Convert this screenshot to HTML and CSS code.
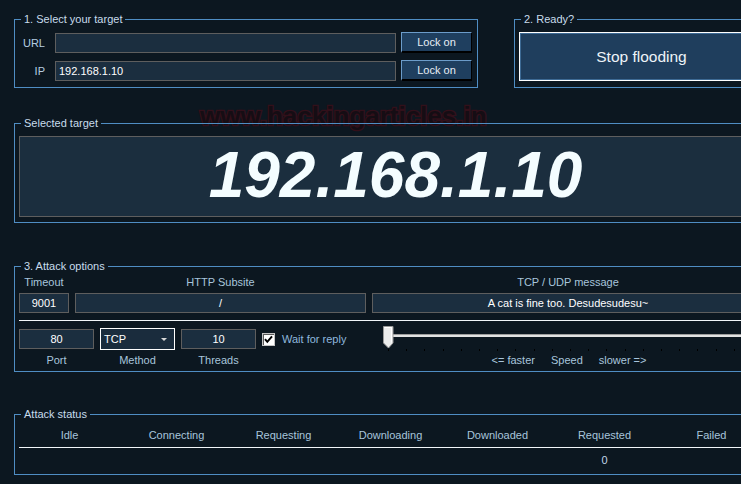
FILE: index.html
```html
<!DOCTYPE html>
<html>
<head>
<meta charset="utf-8">
<title>LOIC</title>
<link rel="stylesheet" href="styles.css">
</head>
<body>
<div class="app">
  <div class="watermark">www.hackingarticles.in</div>

  <div class="top">
    <fieldset class="grp grp-target">
      <legend>1. Select your target</legend>
      <div class="target-rows">
        <div class="trow">
          <span class="tlabel">URL</span>
          <div class="box url"></div>
          <div class="lock">Lock on</div>
        </div>
        <div class="trow">
          <span class="tlabel">IP</span>
          <div class="box url">192.168.1.10</div>
          <div class="lock">Lock on</div>
        </div>
      </div>
    </fieldset>

    <fieldset class="grp grp-ready">
      <legend>2. Ready?</legend>
      <div class="ready-inner">
        <div class="stop">Stop flooding</div>
      </div>
    </fieldset>
  </div>

  <fieldset class="grp grp-wide grp-selected">
    <legend>Selected target</legend>
    <div class="selected-inner">
      <div class="bigip">192.168.1.10</div>
    </div>
  </fieldset>

  <fieldset class="grp grp-wide grp-options">
    <legend>3. Attack options</legend>
    <div class="options-inner">
      <div class="opt-row1">
        <div class="olabel">Timeout</div>
        <div class="olabel">HTTP Subsite</div>
        <div class="olabel">TCP / UDP message</div>
        <div class="box center">9001</div>
        <div class="box center">/</div>
        <div class="box center">A cat is fine too. Desudesudesu~</div>
      </div>
      <div class="hline"></div>
      <div class="opt-row2">
        <div class="box center small">80</div>
        <div class="select">
          <span>TCP</span>
          <span class="arrow"></span>
        </div>
        <div class="box center small">10</div>
        <div class="check-cell">
          <span class="checkbox">
            <svg width="11" height="11" viewBox="0 0 11 11"><path d="M2 5.2 L4.3 7.8 L9 2.4" fill="none" stroke="#000" stroke-width="2"/></svg>
          </span>
          <span class="wait">Wait for reply</span>
        </div>
        <div class="slider">
          <div class="track"></div>
          <div class="ticks"></div>
          <svg class="thumb" width="11" height="23" viewBox="0 0 11 23">
            <path d="M0.5 0.5 H10 V17 L5.5 22 L0.5 17 Z" fill="#ececec" stroke="#9a9a9a" stroke-width="1"/>
            <path d="M1.5 1.5 H8.5 V16.5" fill="none" stroke="#ffffff" stroke-width="1"/>
          </svg>
        </div>
        <div class="olabel">Port</div>
        <div class="olabel">Method</div>
        <div class="olabel">Threads</div>
        <div></div>
        <div class="speed"><span>&lt;= faster</span><span>Speed</span><span>slower =&gt;</span></div>
      </div>
    </div>
  </fieldset>

  <fieldset class="grp grp-wide grp-status">
    <legend>Attack status</legend>
    <div class="status-inner">
      <div class="status-grid">
        <div>Idle</div>
        <div>Connecting</div>
        <div>Requesting</div>
        <div>Downloading</div>
        <div>Downloaded</div>
        <div>Requested</div>
        <div>Failed</div>
      </div>
      <div class="hline"></div>
      <div class="status-grid values">
        <div></div>
        <div></div>
        <div></div>
        <div></div>
        <div></div>
        <div>0</div>
        <div></div>
      </div>
    </div>
  </fieldset>
</div>
</body>
</html>
```

FILE: styles.css
```css
html, body {
  margin: 0;
  padding: 0;
}

body {
  background: #0c1720;
  width: 741px;
  height: 484px;
  overflow: hidden;
  font-family: "Liberation Sans", Arial, sans-serif;
  font-size: 11px;
  color: #a8c5dc;
}

.app {
  position: relative;
  padding: 13px 0 0 14px;
  width: 800px;
}

.watermark {
  position: absolute;
  left: 200px;
  top: 103px;
  z-index: -1;
  font-family: "Liberation Sans", Arial, sans-serif;
  font-weight: bold;
  font-size: 26px;
  line-height: 26px;
  color: #150d14;
  -webkit-text-stroke: 2.6px #32101a;
  paint-order: stroke fill;
  white-space: nowrap;
}

fieldset.grp {
  margin: 0;
  padding: 0;
  border: 1px solid #4f8dc3;
  box-sizing: border-box;
  min-width: 0;
}

legend {
  padding: 0 3px;
  margin-left: 6px;
  line-height: 13px;
  font-size: 11px;
  color: #c8dcec;
}

.top {
  display: flex;
}

.grp-target {
  width: 464px;
}

.grp-ready {
  width: 280px;
  margin-left: 36px !important;
}

.target-rows {
  display: flex;
  flex-direction: column;
  gap: 7px;
  padding: 6px 5px 6px 0;
}

.trow {
  display: flex;
  align-items: center;
  height: 21px;
}

.tlabel {
  width: 30px;
  text-align: right;
  margin-right: 10px;
  color: #b4cde0;
}

.box {
  box-sizing: border-box;
  height: 20px;
  background: #1b2e3f;
  border: 1px solid #5e5e5e;
  color: #ffffff;
  line-height: 18px;
  padding: 0 3px;
  white-space: nowrap;
  overflow: hidden;
}

.box.url {
  width: 341px;
}

.box.center {
  text-align: center;
}

.lock {
  box-sizing: border-box;
  width: 71px;
  height: 21px;
  margin-left: 5px;
  background: #1f3f5f;
  border-top: 1px solid #6c9cca;
  border-left: 1px solid #6c9cca;
  border-right: 1px solid #000;
  border-bottom: 2px solid #000;
  color: #e6eef5;
  font-size: 11px;
  line-height: 18px;
  text-align: center;
}

.ready-inner {
  padding: 6px 0 6px 4px;
}

.stop {
  box-sizing: border-box;
  width: 245px;
  height: 49px;
  background: #1f3e5d;
  border: 1px solid #ffffff;
  box-shadow: inset 0 0 0 1px #3d6a94;
  color: #eef4f8;
  font-size: 15.5px;
  line-height: 47px;
  text-align: center;
}

.grp-wide {
  width: 763px;
}

.grp-selected {
  margin-top: 29px !important;
}

.selected-inner {
  padding: 6px 4px 5px 4px;
}

.bigip {
  box-sizing: border-box;
  height: 81px;
  background: #1b2e3e;
  border: 1px solid #5e5e5e;
  color: #f4fdff;
  font-weight: bold;
  font-style: italic;
  font-size: 64px;
  line-height: 77px;
  text-align: center;
  white-space: nowrap;
}

.grp-options {
  margin-top: 37px !important;
}

.options-inner {
  padding: 3px 0 4px 4px;
}

.opt-row1 {
  display: grid;
  grid-template-columns: 50px 291px 392px;
  column-gap: 6px;
  row-gap: 4px;
}

.olabel {
  line-height: 13px;
  text-align: center;
  color: #a8c5dc;
  white-space: nowrap;
}

.hline {
  height: 1px;
  background: #f2f6f9;
  margin-top: 7px;
}

.opt-row2 {
  margin-top: 7px;
  display: grid;
  grid-template-columns: 75px 75px 75px 115px 380px;
  grid-template-rows: 22px 13px;
  column-gap: 6px;
  row-gap: 4px;
  align-items: center;
}

.select {
  box-sizing: border-box;
  height: 22px;
  border: 1px solid #ffffff;
  background: #1a2c3d;
  color: #ffffff;
  display: flex;
  align-items: center;
  justify-content: space-between;
  padding: 0 7px 0 3px;
}

.arrow {
  width: 0;
  height: 0;
  border-left: 3px solid transparent;
  border-right: 3px solid transparent;
  border-top: 3px solid #d8d8d8;
}

.check-cell {
  display: flex;
  align-items: center;
  height: 22px;
}

.checkbox {
  box-sizing: border-box;
  width: 13px;
  height: 13px;
  background: #ffffff;
  border: 1px solid #c4c4c4;
  box-shadow: inset 1px 1px 0 #5a5a5a;
  display: flex;
  align-items: center;
  justify-content: center;
  margin-right: 7px;
}

.checkbox svg {
  display: block;
}

.wait {
  color: #8fb7de;
  white-space: nowrap;
}

.slider {
  position: relative;
  height: 22px;
}

.track {
  margin: 6px 0 0 10px;
  height: 2px;
  border-top: 1px solid #9c9c9c;
  background: #e2e2e2;
}

.ticks {
  position: absolute;
  left: 5px;
  right: 0;
  top: 21px;
  height: 2px;
  background: repeating-linear-gradient(to right, #000 0, #000 1px, transparent 1px, transparent 18.2px);
}

.thumb {
  position: absolute;
  left: 0;
  top: -2px;
  display: block;
}

.speed {
  display: flex;
  justify-content: center;
  gap: 16px;
  line-height: 13px;
  color: #a8c5dc;
  width: 372px;
  white-space: nowrap;
}

.grp-status {
  margin-top: 36px !important;
}

.status-inner {
  padding: 8px 0 7px 4px;
}

.status-grid {
  display: grid;
  grid-template-columns: repeat(7, 107px);
  margin-left: -3px;
  line-height: 13px;
}

.status-grid div {
  text-align: center;
  color: #a8c5dc;
  white-space: nowrap;
}

.status-grid.values {
  margin-top: 6px;
}

.status-grid.values div {
  color: #c0d6e8;
}

.status-inner .hline {
  margin-top: 5px;
}
```
